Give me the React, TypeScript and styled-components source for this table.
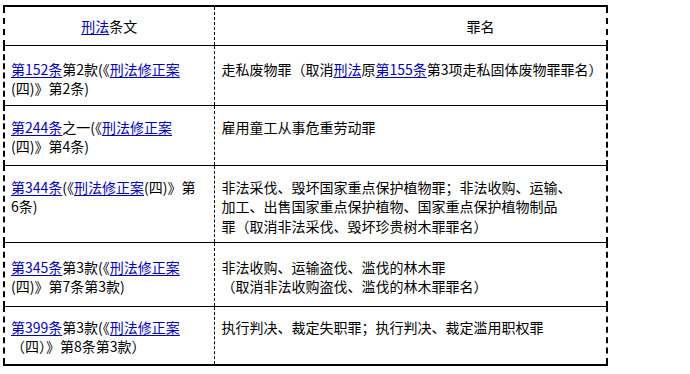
import React from 'react';
import styled, { createGlobalStyle } from 'styled-components';

const GlobalStyle = createGlobalStyle`
  html, body {
    margin: 0;
    padding: 0;
    background: #fff;
  }
  body {
    font-family: 'Noto Sans CJK SC', 'Liberation Sans', sans-serif;
    font-size: 14px;
    color: #000;
  }
`;

interface Row {
  height: number;
  pad: number;
  law: React.ReactNode;
  crime: React.ReactNode;
}

const rows: Row[] = [
  {
    height: 60,
    pad: 14,
    law: (
      <>
        <Link>第152条</Link>第2款(《<Link>刑法修正案</Link>
        <br />
        (四)》第2条)
      </>
    ),
    crime: (
      <>
        走私废物罪（取消<Link>刑法</Link>原<Link>第155条</Link>第3项走私固体废物罪罪名）
      </>
    ),
  },
  {
    height: 60,
    pad: 12,
    law: (
      <>
        <Link>第244条</Link>之一(《<Link>刑法修正案</Link>
        <br />
        (四)》第4条)
      </>
    ),
    crime: <>雇用童工从事危重劳动罪</>,
  },
  {
    height: 77,
    pad: 12,
    law: (
      <>
        <Link>第344条</Link>(《<Link>刑法修正案</Link>(四)》第
        <br />
        6条)
      </>
    ),
    crime: (
      <>
        非法采伐、毁坏国家重点保护植物罪；非法收购、运输、
        <br />
        加工、出售国家重点保护植物、国家重点保护植物制品
        <br />
        罪（取消非法采伐、毁坏珍贵树木罪罪名）
      </>
    ),
  },
  {
    height: 64,
    pad: 15,
    law: (
      <>
        <Link>第345条</Link>第3款(《<Link>刑法修正案</Link>
        <br />
        (四)》第7条第3款)
      </>
    ),
    crime: (
      <>
        非法收购、运输盗伐、滥伐的林木罪
        <br />
        （取消非法收购盗伐、滥伐的林木罪罪名）
      </>
    ),
  },
  {
    height: 59,
    pad: 11,
    law: (
      <>
        <Link>第399条</Link>第3款(《<Link>刑法修正案</Link>
        <br />
        （四）》第8条第3款）
      </>
    ),
    crime: <>执行判决、裁定失职罪；执行判决、裁定滥用职权罪</>,
  },
];

function Link({ children }: { children: React.ReactNode }) {
  return <Anchor href="#">{children}</Anchor>;
}

export default function App() {
  return (
    <>
      <GlobalStyle />
      <Page>
        <Table>
          <colgroup>
            <col style={{ width: 210 }} />
            <col />
          </colgroup>
          <tbody>
            <TableRow $h={39}>
              <HeadCell $align="center">
                <Link>刑法</Link>条文
              </HeadCell>
              <HeadCell $align="left" $indent={252}>
                罪名
              </HeadCell>
            </TableRow>
            {rows.map((r, i) => (
              <TableRow key={i} $h={r.height}>
                <LawCell $pad={r.pad}>{r.law}</LawCell>
                <CrimeCell $pad={r.pad}>{r.crime}</CrimeCell>
              </TableRow>
            ))}
          </tbody>
        </Table>
      </Page>
    </>
  );
}

const Page = styled.div`
  padding: 5px 0 0 3px;
`;

const Table = styled.table`
  width: 605px;
  border-collapse: collapse;
  table-layout: fixed;
  border-top: 2px solid #000;
  border-bottom: 2px solid #000;
  border-left: 2px dashed #000;
  border-right: 2px dashed #000;
`;

const TableRow = styled.tr<{ $h: number }>`
  height: ${p => p.$h}px;
  border-bottom: 1px solid #000;
`;

const HeadCell = styled.td<{ $align: string; $indent?: number }>`
  text-align: ${p => p.$align};
  vertical-align: middle;
  padding: 2px 0 0 ${p => p.$indent ?? 0}px;
  line-height: 19.5px;
  white-space: nowrap;
  & + & {
    border-left: 1px dashed #000;
  }
`;

const LawCell = styled.td<{ $pad: number }>`
  vertical-align: top;
  padding: ${p => p.$pad}px 0 0 6px;
  line-height: 19.5px;
  white-space: nowrap;
  overflow: hidden;
`;

const CrimeCell = styled.td<{ $pad: number }>`
  vertical-align: top;
  padding: ${p => p.$pad}px 0 0 7px;
  line-height: 19.5px;
  white-space: nowrap;
  border-left: 1px dashed #000;
`;

const Anchor = styled.a`
  color: #0000cc;
  text-decoration: underline;
  text-underline-offset: 2px;
`;
